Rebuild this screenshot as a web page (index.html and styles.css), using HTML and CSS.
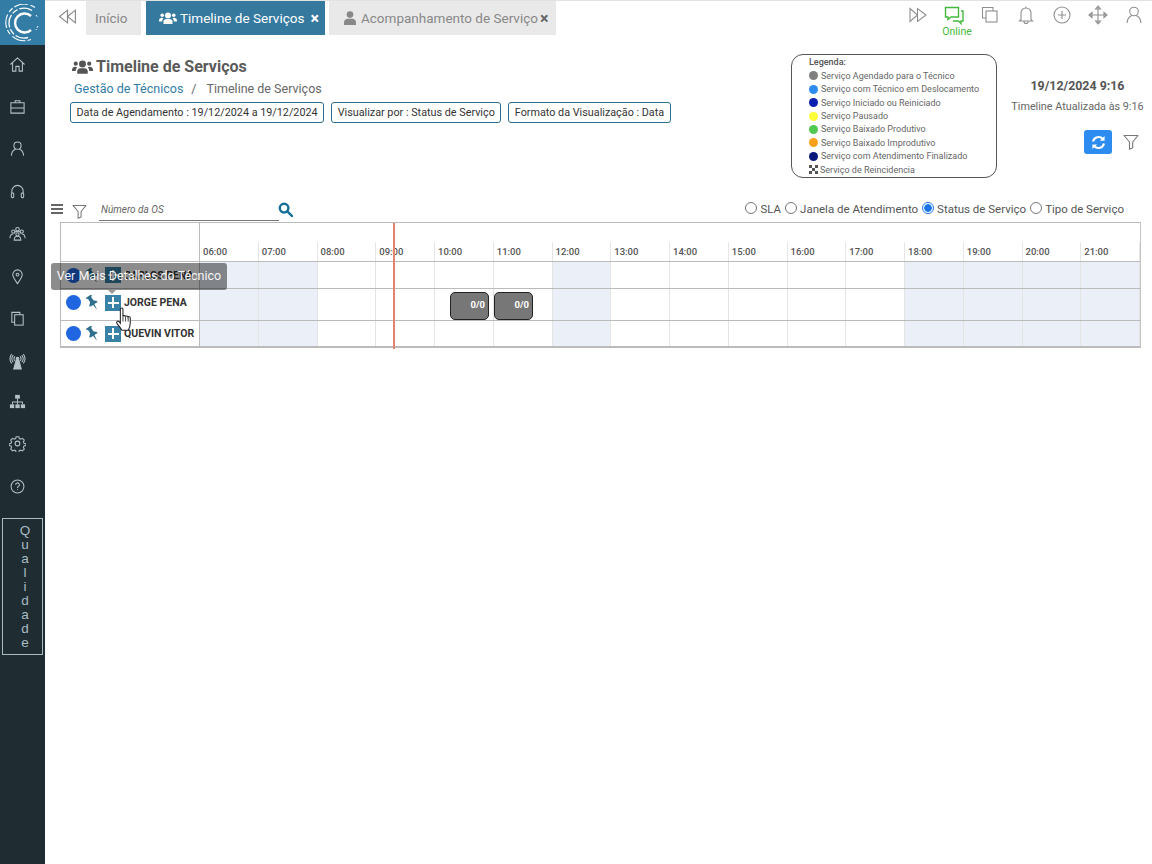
FILE: index.html
```html
<!DOCTYPE html>
<html lang="pt-BR">
<head>
<meta charset="utf-8">
<title>Timeline de Serviços</title>
<link rel="stylesheet" href="styles.css">
</head>
<body>
<svg class="defs" width="0" height="0" aria-hidden="true">
  <symbol id="users" viewBox="0 0 20 14">
    <circle cx="10" cy="3.6" r="3.3"/><circle cx="3.6" cy="3.4" r="2"/><circle cx="16.4" cy="3.4" r="2"/>
    <path d="M5 13v-2.4C5 8.5 6.6 7.6 8 7.6h4c1.4 0 3 .9 3 3V13z"/>
    <path d="M0 9.6C0 7.4 1.4 6.3 3 6.3c.8 0 1.5.2 2 .7-1 .8-1.4 2-1.4 3.3H0zM20 9.6c0-2.2-1.4-3.3-3-3.3-.8 0-1.5.2-2 .7 1 .8 1.4 2 1.4 3.3H20z"/>
  </symbol>
  <symbol id="filter" viewBox="0 0 16 16">
    <path d="M1 1.5h14L9.7 8v5.8l-3.2 1.4V8z" fill="none" stroke="currentColor" stroke-width="1.1" stroke-linejoin="round"/>
  </symbol>
  <symbol id="pin" viewBox="0 0 16 16">
    <path transform="rotate(-32 8 8)" d="M4.500 0h7v1.200l-1.500 1V6.500l2.800 2.600V10.500H8.800L8.200 16.500h-.4L7.200 10.500H3.200V9.100L6 6.500V2.200l-1.500-1z"/>
  </symbol>
</svg>

<aside class="sidebar">
  <div class="logo">
    <svg width="36" height="38" viewBox="0 0 36 38" fill="none" stroke="#fff">
      <path d="M26 12a9.500 9.500 0 1 0 0 14" stroke-width="2.400"/>
      <path d="M27 6.500A15 15 0 0 0 4 19a15 15 0 0 0 19 14.500" stroke-width="1.300" stroke-dasharray="13 2 6 2"/>
      <path d="M30 3.500A18.500 18.500 0 0 0 .8 19 18.500 18.500 0 0 0 26 35.500" stroke-width="1.100" stroke-dasharray="5 3 14 2"/>
      <path d="M31 11l2 3M33 22l-2 4" stroke-width="1" stroke-dasharray="2 1.500"/>
    </svg>
  </div>
  <nav class="side-nav">
    <a class="side-item"><svg viewBox="0 0 18 18"><path d="M1.500 9 9 2l7.500 7M3.800 7.500V16h3.500v-5h3.400v5h3.500V7.500"/></svg></a>
    <a class="side-item"><svg viewBox="0 0 18 18"><path d="M2 5h14v11H2zM2 10.500h14M6.500 5V3h5v2M9 10v1"/></svg></a>
    <a class="side-item"><svg viewBox="0 0 18 18"><circle cx="9" cy="6" r="3.800"/><path d="M2.500 16.500c.4-4 2.500-6.300 4.500-6.800M15.500 16.500c-.4-4-2.500-6.300-4.500-6.800"/></svg></a>
    <a class="side-item"><svg viewBox="0 0 18 18"><path d="M3 11V8.500a6 6 0 0 1 12 0V11"/><rect x="2.500" y="10.500" width="2.500" height="5" rx="1"/><rect x="13" y="10.500" width="2.500" height="5" rx="1"/></svg></a>
    <a class="side-item"><svg viewBox="0 0 18 18"><circle cx="9" cy="4.500" r="1.900"/><circle cx="4.500" cy="7" r="1.700"/><circle cx="13.500" cy="7" r="1.700"/><circle cx="9" cy="10" r="1.700"/><path d="M1 14c0-3 1.500-4.500 3.500-4.500M17 14c0-3-1.500-4.500-3.500-4.500M5.500 16c0-2.500 1.500-4 3.500-4s3.500 1.500 3.500 4zM6 9c-.5-1.500 1-2.500 3-2.500S12.500 7.500 12 9"/></svg></a>
    <a class="side-item"><svg viewBox="0 0 18 18"><path d="M9 16.500c-2.500-3.500-5-6.500-5-9.500a5 5 0 0 1 10 0c0 3-2.500 6-5 9.500z"/><circle cx="9" cy="7" r="1.500"/></svg></a>
    <a class="side-item"><svg viewBox="0 0 18 18"><path d="M6 13H3V2.500h8.500V5"/><rect x="6" y="5" width="9" height="11"/></svg></a>
    <a class="side-item"><svg viewBox="0 0 18 18"><path d="M7.500 8 5 17h8L10.500 8z" fill="#b5c2c8"/><circle cx="9" cy="6" r="1.500" fill="#b5c2c8"/><path d="M6.300 3.500a3.800 3.800 0 0 0 0 5M11.700 3.500a3.800 3.800 0 0 1 0 5M4.500 2.200a6 6 0 0 0 0 7.600M13.500 2.200a6 6 0 0 1 0 7.600M2.800 1a8.500 8.500 0 0 0 0 10M15.200 1a8.500 8.500 0 0 1 0 10"/></svg></a>
    <a class="side-item solid"><svg viewBox="0 0 18 18"><rect x="6.500" y="2" width="5" height="4"/><rect x="1" y="12" width="4.500" height="4"/><rect x="6.800" y="12" width="4.500" height="4"/><rect x="12.500" y="12" width="4.500" height="4"/><path d="M8.500 6h1v3h5.300v3h-1v-2H9.500v2h-1v-2H4.200v2h-1V9h5.300z"/></svg></a>
    <a class="side-item"><svg viewBox="0 0 18 18"><circle cx="9" cy="9" r="2.500"/><path d="M7.500 1.800h3l.4 2 1.500.7 1.800-1 2 2-1 1.800.7 1.500 2 .4v2l-2 .4-.7 1.500 1 1.800-2 2-1.800-1-1.500.7-.4 2h-3l-.4-2-1.500-.7-1.800 1-2-2 1-1.800-.7-1.500-2-.4v-2l2-.4.7-1.500-1-1.800 2-2 1.800 1 1.500-.7z"/></svg></a>
    <a class="side-item"><svg viewBox="0 0 18 18"><circle cx="9" cy="9" r="6.800"/><path d="M7 7.200a2 2 0 1 1 3 1.700c-.7.400-1 .8-1 1.600M9 12v.8"/></svg></a>
  </nav>
  <div class="quality"><span class="quality-text">Qualidade</span></div>
</aside>

<main class="main">
  <header class="topbar">
    <svg class="rewind" viewBox="0 0 18 14"><path d="M9 1 1.500 7 9 13zM16.500 1 9 7l7.500 6z"/></svg>
    <a class="tab tab-home">Início</a>
    <a class="tab tab-active"><svg class="tab-icon"><use href="#users"/></svg>Timeline de Serviços<span class="tab-x">×</span></a>
    <a class="tab tab-idle"><svg class="tab-icon-user" viewBox="0 0 14 14"><circle cx="7" cy="3.600" r="3.300"/><path d="M1 14v-2.500C1 9 3 7.800 4.500 7.800h5c1.500 0 3.500 1.200 3.500 3.700V14z"/></svg>Acompanhamento de Serviço<span class="tab-x">×</span></a>
    <div class="top-icons">
      <svg class="top-icon" viewBox="0 0 20 20"><path d="M2 3.500v13l7.500-6.500zM9.500 3.500v13l8.500-6.500z"/></svg>
      <div class="online">
        <svg class="top-icon green" viewBox="0 0 20 20"><path d="M1.500 2.500h13v9.500h-7.500l-3 2.500V12H1.500zM17 6h2v10h-2v2.500l-2.500-2.500H9"/></svg>
        <span>Online</span>
      </div>
      <svg class="top-icon" viewBox="0 0 20 20"><path d="M6 13H2.500V2.500H13V6"/><rect x="6" y="6" width="11" height="11"/></svg>
      <svg class="top-icon" viewBox="0 0 20 20"><path d="M5 14.500V8a5 5 0 0 1 10 0v6.500l1.500 1.500h-13zM9.800 3V1.500M8 16.500a2 2 0 0 0 4 0"/></svg>
      <svg class="top-icon" viewBox="0 0 20 20"><circle cx="10" cy="10" r="8"/><path d="M10 6v8M6 10h8"/></svg>
      <svg class="top-icon" viewBox="0 0 20 20"><path d="M10 2v16M2 10h16M7.500 4 10 1l2.500 3zM7.500 16 10 19l2.500-3zM4 7.500 1 10l3 2.500zM16 7.500l3 2.500-3 2.500z"/></svg>
      <svg class="top-icon" viewBox="0 0 20 20"><circle cx="10" cy="6.500" r="4.300"/><path d="M3 18c.4-4.500 2.800-6.800 5-7.500M17 18c-.4-4.500-2.800-6.800-5-7.500"/></svg>
    </div>
  </header>

  <section class="page-head">
    <div class="head-left">
      <h1 class="page-title"><svg class="title-icon"><use href="#users"/></svg>Timeline de Serviços</h1>
      <div class="crumbs"><a class="crumb-link">Gestão de Técnicos</a><span class="crumb-sep">/</span><span>Timeline de Serviços</span></div>
      <div class="chips">
        <span class="chip">Data de Agendamento : 19/12/2024 a 19/12/2024</span>
        <span class="chip">Visualizar por : Status de Serviço</span>
        <span class="chip">Formato da Visualização : Data</span>
      </div>
    </div>
    <div class="legend">
      <div class="legend-title">Legenda:</div>
      <div class="legend-row"><i class="dot c-gray"></i>Serviço Agendado para o Técnico</div>
      <div class="legend-row"><i class="dot c-sky"></i>Serviço com Técnico em Deslocamento</div>
      <div class="legend-row"><i class="dot c-blue"></i>Serviço Iniciado ou Reiniciado</div>
      <div class="legend-row"><i class="dot c-yellow"></i>Serviço Pausado</div>
      <div class="legend-row"><i class="dot c-green"></i>Serviço Baixado Produtivo</div>
      <div class="legend-row"><i class="dot c-orange"></i>Serviço Baixado Improdutivo</div>
      <div class="legend-row"><i class="dot c-navy"></i>Serviço com Atendimento Finalizado</div>
      <div class="legend-row"><svg class="reinc" viewBox="0 0 9 9"><path d="M0 0h3v3H0zM6 0h3v3H6zM3 3h3v3H3zM0 6h3v3H0zM6 6h3v3H6z"/></svg>Serviço de Reincidencia</div>
    </div>
    <div class="head-right">
      <div class="now">19/12/2024 9:16</div>
      <div class="updated">Timeline Atualizada às 9:16</div>
      <div class="head-actions">
        <button class="refresh"><svg viewBox="0 0 16 16" fill="none" stroke="#fff" stroke-width="2.300"><path d="M2.200 7a6 6 0 0 1 10.400-2.800M13.800 9a6 6 0 0 1-10.400 2.800"/><path d="M14.500 1v5h-5zM1.500 15v-5h5z" fill="#fff" stroke="none"/></svg></button>
        <svg class="head-filter"><use href="#filter"/></svg>
      </div>
    </div>
  </section>

  <section class="toolbar">
    <div class="burger"><i></i><i></i><i></i></div>
    <svg class="tool-filter"><use href="#filter"/></svg>
    <div class="os-search">Número da OS</div>
    <svg class="search-icon" viewBox="0 0 16 16" fill="none" stroke="#1a6f96" stroke-width="2.600"><circle cx="6.500" cy="6.500" r="4.600"/><path d="m10 10 5 5" stroke-linecap="round"/></svg>
    <div class="radios">
      <label class="radio"><i class="radio-dot"></i>SLA</label>
      <label class="radio"><i class="radio-dot"></i>Janela de Atendimento</label>
      <label class="radio"><i class="radio-dot on"></i>Status de Serviço</label>
      <label class="radio"><i class="radio-dot"></i>Tipo de Serviço</label>
    </div>
  </section>

  <section class="timeline">
    <div class="t-row t-head">
      <div class="t-name"></div>
      <div class="h">06:00</div><div class="h">07:00</div><div class="h">08:00</div><div class="h">09:00</div><div class="h">10:00</div><div class="h">11:00</div><div class="h">12:00</div><div class="h">13:00</div><div class="h">14:00</div><div class="h">15:00</div><div class="h">16:00</div><div class="h">17:00</div><div class="h">18:00</div><div class="h">19:00</div><div class="h">20:00</div><div class="h">21:00</div>
    </div>
    <div class="t-row r1">
      <div class="t-name"><i class="tech-dot"></i><svg class="pin"><use href="#pin"/></svg><span class="plus"></span><b>CARLOS PENA</b></div>
      <i class="c off"></i><i class="c off"></i><i class="c"></i><i class="c"></i><i class="c"></i><i class="c"></i><i class="c off"></i><i class="c"></i><i class="c"></i><i class="c"></i><i class="c"></i><i class="c"></i><i class="c off"></i><i class="c off"></i><i class="c off"></i><i class="c off"></i>
    </div>
    <div class="t-row r2">
      <div class="t-name"><i class="tech-dot"></i><svg class="pin"><use href="#pin"/></svg><span class="plus"></span><b>JORGE PENA</b></div>
      <i class="c off"></i><i class="c off"></i><i class="c"></i><i class="c"></i><i class="c"></i><i class="c"></i><i class="c off"></i><i class="c"></i><i class="c"></i><i class="c"></i><i class="c"></i><i class="c"></i><i class="c off"></i><i class="c off"></i><i class="c off"></i><i class="c off"></i>
    </div>
    <div class="t-row r3">
      <div class="t-name"><i class="tech-dot"></i><svg class="pin"><use href="#pin"/></svg><span class="plus"></span><b>QUEVIN VITOR</b></div>
      <i class="c off"></i><i class="c off"></i><i class="c"></i><i class="c"></i><i class="c"></i><i class="c"></i><i class="c off"></i><i class="c"></i><i class="c"></i><i class="c"></i><i class="c"></i><i class="c"></i><i class="c off"></i><i class="c off"></i><i class="c off"></i><i class="c off"></i>
    </div>
    <div class="now-line"></div>
    <div class="event ev1">0/0</div>
    <div class="event ev2">0/0</div>
    <div class="tooltip">Ver Mais Detalhes do Técnico</div>
    <svg class="cursor" viewBox="0 0 16 24"><path d="M4.500 2.200c0-1.600 2.500-1.600 2.500 0V9c.2-1 2.300-1 2.500.3.300-1 2.200-.9 2.400.4.400-.8 2-.6 2.100.7v5c0 3-1.400 6-2 7H6c-1-2-3.500-4.600-4.800-6.700-1-1.700 1-2.800 2-1.600l1.300 1.500z" fill="#fff" stroke="#222" stroke-width="1"/><path d="M7 9v5M9.500 9.500V14M12 10v4" stroke="#222" stroke-width=".8" fill="none"/></svg>
  </section>
</main>
</body>
</html>
```
FILE: styles.css
```css
* { box-sizing: border-box; }
html, body { margin: 0; height: 100%; }
body {
  display: flex;
  min-height: 864px;
  font-family: Roboto, "Liberation Sans", sans-serif;
  color: #555;
  background: #fff;
  overflow: hidden;
}
.defs { position: absolute; }

/* sidebar */
.sidebar { width: 45px; flex: none; background: #1f2d33; display: flex; flex-direction: column; }
.logo { height: 45px; background: #337ca6; display: flex; align-items: center; justify-content: center; padding-left: 1px; }
.side-nav { display: flex; flex-direction: column; gap: 4.450px; }
.side-item { height: 38px; display: flex; align-items: center; justify-content: center; padding-right: 11px; }
.side-item svg { width: 17px; height: 17px; fill: none; stroke: #b5c2c8; stroke-width: 1.100; }
.side-item.solid { margin-top: -2px; }
.side-item.solid svg { fill: #b5c2c8; stroke: none; }
.quality {
  margin: 12.500px 0 0 2px;
  width: 41px;
  height: 137px;
  border: 1px solid #a9bbc3;
  display: flex;
  justify-content: center;
  padding: 4px 0 0 4px;
}
.quality-text {
  writing-mode: vertical-rl;
  text-orientation: upright;
  font: 13.500px "Liberation Sans", sans-serif;
  letter-spacing: -1px;
  line-height: 14px;
  color: #a9bbc3;
}

/* top bar */
.main { flex: 1; min-width: 0; }
.topbar { display: flex; height: 36px; border-top: 1px solid #e2e2e2; padding-left: 13px; position: relative; }
.rewind { width: 19px; height: 15px; margin: 8px 9px 0 0; fill: none; stroke: #8a8a8a; stroke-width: 1.100; }
.tab { height: 34px; display: flex; align-items: center; font-size: 13.500px; }
.tab-home { width: 55px; background: #e9e9e9; color: #888; padding-left: 9px; margin-right: 5px; }
.tab-active { width: 179px; background: #35799f; color: #fff; padding-left: 13px; margin-right: 4px; white-space: nowrap; }
.tab-idle { width: 227px; background: #e9e9e9; color: #888; padding-left: 14px; white-space: nowrap; }
.tab-icon { width: 18px; height: 13px; fill: #fff; margin-right: 3px; }
.tab-icon-user { width: 14px; height: 14px; fill: #888; margin-right: 4px; }
.tab-x { font-weight: 700; font-size: 16px; margin-left: 6px; line-height: 14px; padding-top: 2px; }
.tab-idle .tab-x { margin-left: 2px; color: #666; }
.top-icons { margin-left: auto; display: flex; align-items: flex-start; gap: 16px; padding: 4px 8px 0 0; }
.top-icon { width: 20px; height: 20px; fill: none; stroke: #8f8f8f; stroke-width: 1.100; flex: none; }
.top-icon.green { stroke: #46b93d; stroke-width: 1.400; }
.online { width: 20px; height: 20px; display: flex; flex-direction: column; align-items: center; }
.online span { font-size: 10.500px; color: #46b93d; margin-left: 6px; }

/* head */
.page-head { display: flex; height: 165px; padding: 0 6px 0 25px; }
.head-left { flex: 1; min-width: 0; padding-top: 21px; }
.page-title { margin: 0 0 0 2px; font-size: 16px; font-weight: 700; line-height: 20px; color: #5a5a5a; display: flex; align-items: center; }
.title-icon { width: 21px; height: 15px; fill: #555; margin-right: 3px; }
.crumbs { font-size: 12.500px; line-height: 16px; margin: 4px 0 0 4px; color: #666; }
.crumb-link { color: #337ca6; }
.crumb-sep { margin: 0 10px 0 8px; }
.chips { display: flex; gap: 7px; margin-top: 5px; }
.chip { height: 21px; border: 1px solid #2c6f8d; border-radius: 3px; padding: 0 5.500px; font-size: 10.800px; line-height: 19px; color: #333; white-space: nowrap; }
.legend { width: 206px; height: 124px; margin: 18px 3px 0 0; border: 1px solid #555; border-radius: 12px; padding: 1px 0 0 17px; font-size: 9px; color: #666; }
.legend-title { line-height: 12px; font-weight: 500; color: #555; margin-bottom: 1px; }
.legend-row { height: 13.450px; display: flex; align-items: center; white-space: nowrap; }
.dot { width: 9px; height: 9px; border-radius: 50%; margin-right: 3px; flex: none; }
.c-gray { background: #808080; }
.c-sky { background: #2d8cf0; }
.c-blue { background: #0a1fb0; }
.c-yellow { background: #fdfd3a; }
.c-green { background: #4fc94f; }
.c-orange { background: #f9a11b; }
.c-navy { background: #0a1a78; }
.reinc { width: 9px; height: 9px; fill: #555; margin-right: 2px; flex: none; }
.head-right { width: 137px; margin-left: 9px; display: flex; flex-direction: column; align-items: center; padding-top: 42px; }
.now { font-size: 12.400px; font-weight: 700; line-height: 16px; color: #555; }
.updated { font-size: 10.800px; line-height: 14px; margin-top: 6px; white-space: nowrap; color: #666; }
.head-actions { align-self: flex-end; display: flex; align-items: center; gap: 11px; margin-top: 16px; margin-right: 7px; }
.refresh { width: 28px; height: 24px; border: 0; border-radius: 3px; background: #2d8cf0; display: flex; align-items: center; justify-content: center; padding: 0; }
.refresh svg { width: 15px; height: 15px; }
.head-filter { width: 16px; height: 16px; color: #777; }

/* toolbar */
.toolbar { display: flex; align-items: flex-start; height: 21px; padding-left: 6px; position: relative; }
.burger { width: 12px; display: flex; flex-direction: column; gap: 2px; margin-top: 3px; }
.burger i { height: 2px; background: #666; }
.tool-filter { width: 15px; height: 15px; color: #777; margin: 3px 0 0 9px; }
.os-search { width: 180px; height: 20px; margin-left: 12px; padding: 3px 0 0 2px; border-bottom: 1px solid #777; font-size: 10px; font-style: italic; line-height: 12px; color: #666; }
.search-icon { width: 15px; height: 15px; margin: 1px 0 0 -1px; }
.radios { margin-left: auto; display: flex; gap: 4px; padding: 0 28px 0 0; }
.radio { display: flex; align-items: center; font-size: 11.500px; color: #555; height: 16px; white-space: nowrap; }
.radio-dot { width: 12px; height: 12px; border: 1px solid #777; border-radius: 50%; margin: 0 3px 2px 0; }
.radio-dot.on { border: 1.500px solid #1a73e8; background: radial-gradient(circle, #1a73e8 3.500px, #fff 4px); }

/* timeline */
.timeline { position: relative; width: 1080px; margin-left: 15px; border-top: 1px solid #bbb; border-left: 1px solid #bbb; box-shadow: 1px 0 0 #c4c4c4; }
.t-row { display: grid; grid-template-columns: 139px repeat(16, 58.750px); border-bottom: 1px solid #bbb; }
.t-head { height: 39px; }
.r1 { height: 27px; }
.r2 { height: 32px; }
.r2 .t-name { padding-bottom: 4px; }
.r3 { height: 27px; border-bottom-width: 2px; }
.t-name { border-right: 1px solid #bbb; display: flex; align-items: center; padding-left: 5px; font-size: 10.500px; color: #333; white-space: nowrap; overflow: hidden; }
.t-name b { margin-left: 3px; font-weight: 700; }
.tech-dot { width: 15px; height: 15px; border-radius: 50%; background: #1f66e0; flex: none; }
.pin { width: 15px; height: 15px; fill: #2e6f8e; flex: none; margin-left: 4px; }
.plus {
  width: 16px;
  height: 16px;
  flex: none;
  margin-left: 5px;
  background: linear-gradient(#fff, #fff) center / 11px 2px no-repeat, linear-gradient(#fff, #fff) center / 2px 11px no-repeat, #3a81a8;
}
.h { font-size: 9.500px; font-weight: 500; color: #555; padding: 23px 0 0 3px; line-height: 12px; position: relative; }
.h::after { content: ""; position: absolute; right: 0; top: 19px; bottom: 0; width: 1px; background: #e6e6e6; }
.c { border-right: 1px solid #e4e4e4; }
.c.off { background: #eaeff8; }
.now-line { position: absolute; left: 332px; top: 0; bottom: -1px; width: 2px; background: #e0846e; }
.event { position: absolute; left: 389px; top: 69px; width: 39px; height: 28px; background: #777; border: 1px solid #222; border-radius: 5px; color: #fff; font-size: 9.500px; font-weight: 700; text-align: right; line-height: 24px; padding-right: 3px; }
.ev2 { left: 433px; }
.tooltip { position: absolute; left: -10px; top: 40px; width: 176px; height: 27px; background: rgba(0, 0, 0, .45); border-radius: 3px; color: rgba(255, 255, 255, .95); font-size: 12.500px; line-height: 26px; text-align: center; }
.tooltip::after { content: ""; position: absolute; left: 57px; top: 27px; border: 4px solid transparent; border-top-color: #999; border-bottom: 0; }
.cursor { position: absolute; left: 54px; top: 84px; width: 18px; height: 25px; }
```
